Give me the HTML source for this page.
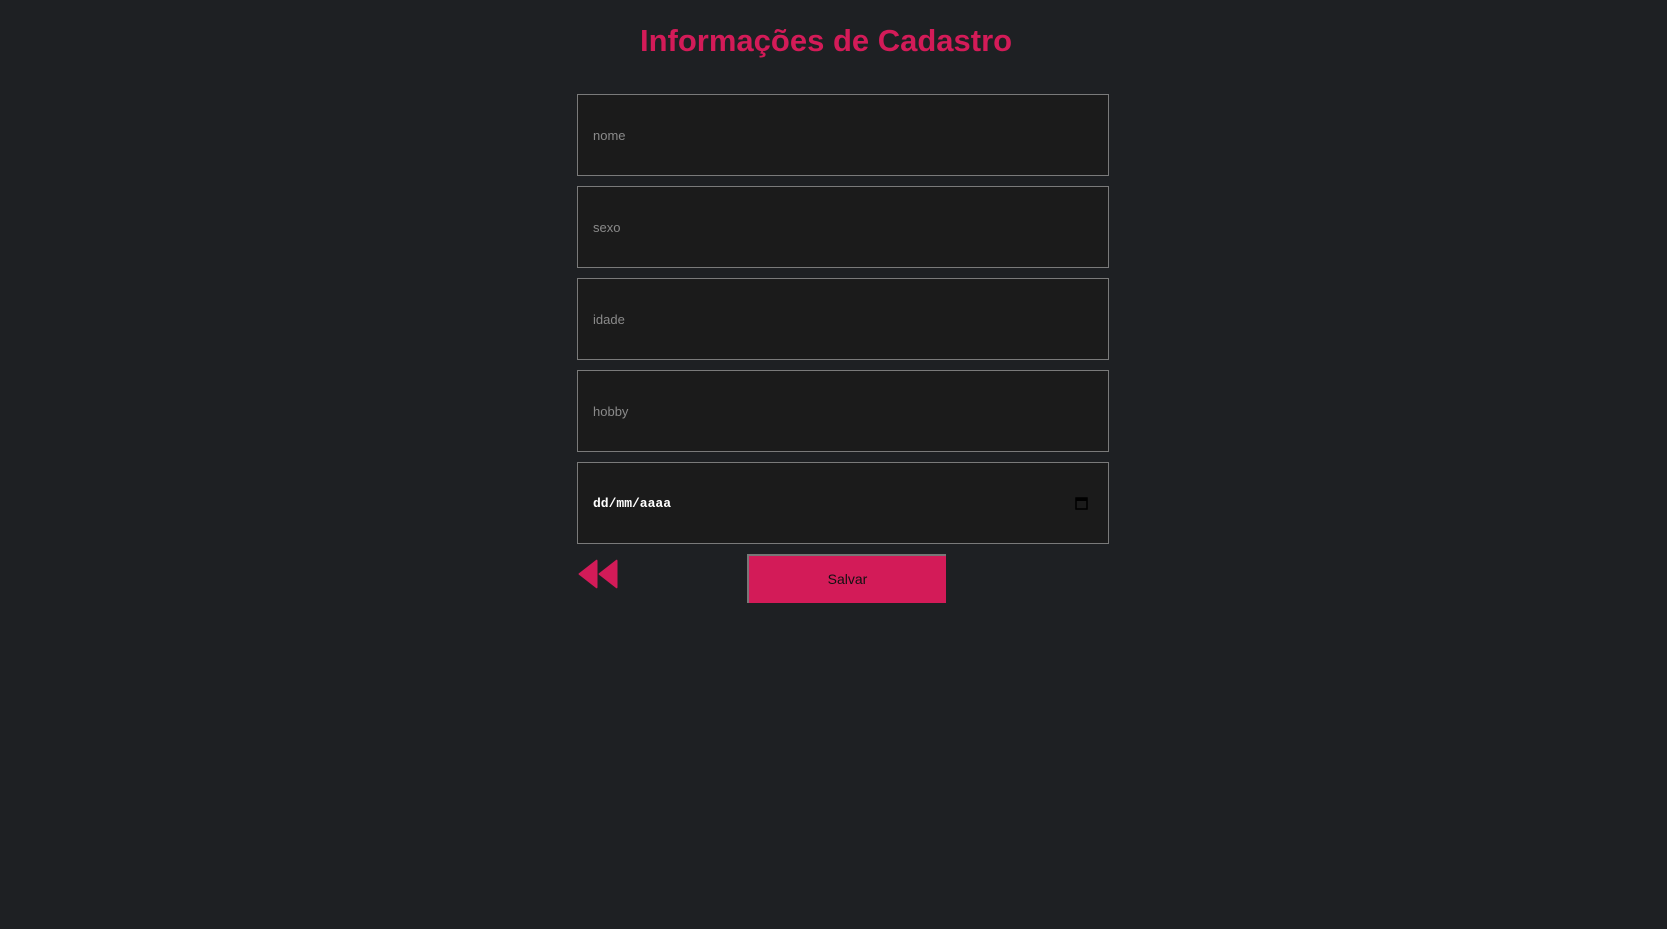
<!DOCTYPE html>
<html><head><meta charset="utf-8"><style>
body{margin:0;background:#1e2023;width:1667px;height:929px;overflow:hidden;font-family:"Liberation Sans",sans-serif}
h1{position:absolute;left:640px;width:374px;top:23px;margin:0;text-align:left;color:#d31b58;font-size:31px;font-weight:bold;white-space:nowrap}
.in{position:absolute;left:577px;width:530px;height:80px;border:1px solid #7a7a7a;background:#1b1b1b;color:#8a8a8a;font-size:13px}
.in span{position:absolute;left:15px;top:33px}
.date span{color:#fff;font-family:"Liberation Mono",monospace;font-weight:bold}
.btn{position:absolute;left:747px;top:554px;width:199px;height:49px;background:#d31b58;border-top:2px solid #777;border-left:2px solid #777;box-sizing:border-box;color:#111;font-size:14px;text-align:center;line-height:47px}
</style></head><body>
<h1>Informações de Cadastro</h1>
<div class="in" style="top:94px"><span>nome</span></div>
<div class="in" style="top:186px"><span>sexo</span></div>
<div class="in" style="top:278px"><span>idade</span></div>
<div class="in" style="top:370px"><span>hobby</span></div>
<div class="in date" style="top:462px"><span>dd/mm/aaaa</span>
<svg style="position:absolute;left:497px;top:33px" width="13" height="14" viewBox="0 0 13 14"><rect x="1" y="2" width="11" height="11" fill="none" stroke="#000" stroke-width="1.5"/><rect x="1" y="2" width="11" height="3" fill="#000"/></svg>
</div>
<svg style="position:absolute;left:577px;top:558px" width="41" height="32" viewBox="0 0 41 32"><path d="M19 2 L3 14.5 Q0 16 3 17.5 L19 30 Q20.5 31 20.5 29 L20.5 3 Q20.5 1 19 2Z M39 2 L23 14.5 Q20 16 23 17.5 L39 30 Q40.5 31 40.5 29 L40.5 3 Q40.5 1 39 2Z" fill="#d31b58"/></svg>
<div class="btn">Salvar</div>
</body></html>
